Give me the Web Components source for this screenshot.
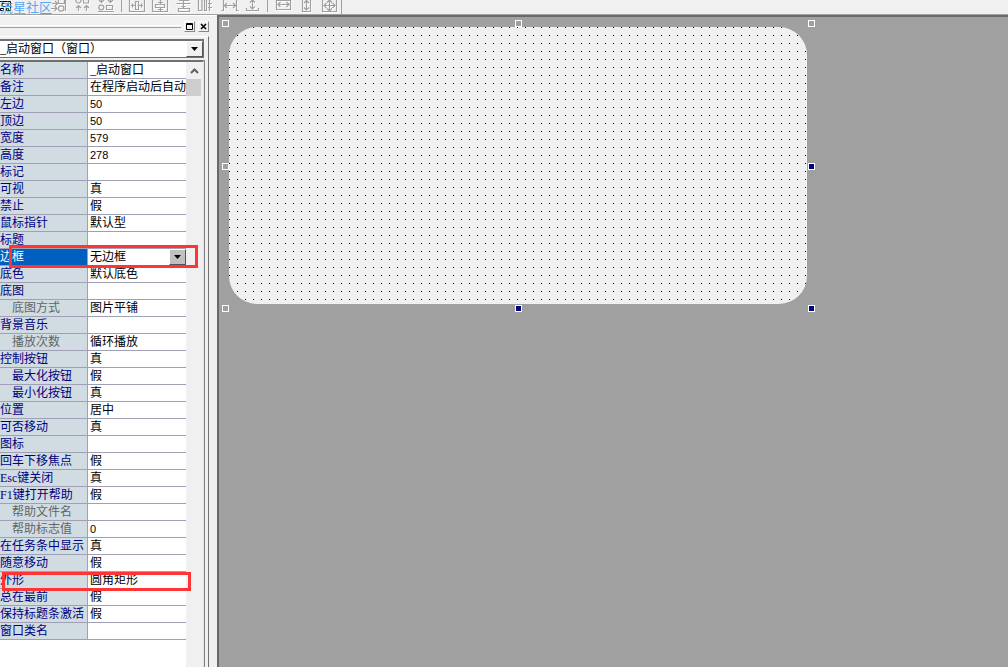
<!DOCTYPE html>
<html lang="zh-CN">
<head>
<meta charset="utf-8">
<title>窗口设计器</title>
<style>
html,body{margin:0;height:100%}
body{background:#f0f0f0;color:#000;font:12px/16px "Liberation Serif","Noto Sans CJK SC",serif;overflow:hidden}
</style>
</head>
<body>
<designer-app></designer-app>
<script>
class Base extends HTMLElement {
  connectedCallback() {
    if (!this.shadowRoot) this.attachShadow({mode: 'open'}).innerHTML = this.render();
  }
}

customElements.define('tool-button', class extends Base {
  render() {
    const x = this.getAttribute('start');
    return `<style>
      :host{display:block;flex:none}
      button{display:block;width:23px;height:14px;padding:0;border:0;background:none}
      svg{display:block;filter:drop-shadow(1px 1px 0 #fff)}
    </style>
    <button type="button" aria-label="${this.getAttribute('label')}"><svg width="23" height="14" viewBox="${x} 0 23 14" fill="none" stroke="#a0a0a0" stroke-width="1.2"><path d="${this.getAttribute('shape')}"/></svg></button>`;
  }
});

const tools = [
  [49, '左对齐', 'M52 3.5h5M55 1l2.500 2.500L55 6M58.500-1v4.500h6V-1M51 8.500h6M54.500 6l2.500 2.500-2.500 2.500M58.500 8.500a2.700 2.700 0 1 0 5.400 0a2.700 2.700 0 1 0-5.400 0M65.500 0v11'],
  [72, '顶对齐', 'M76 0v1.500l1.500 1.500h2L81 1.500V0M83.500-1v4h5v-4M78.500 11V5.500M76 8l2.500-2.500L81 8M86.500 11V5.500M84 8l2.500-2.500L89 8'],
  [95, '底对齐', 'M101.500-1v4M99 0l2.500 2.500L104 0M110.500-1v4M108 0l2.500 2.500L113 0M98.800 7.500a2.500 2.300 0 1 0 5 0a2.500 2.300 0 1 0-5 0M106.500 5.500h6v4h-6zM98 11.500h16'],
  null,
  [126, '水平居中', 'M129.500-1v12.500h15V-1M135.500 1.500h3v8h-3zM131 5.500h4M139 5.500h4M132.500 3.500v4M141.500 3.500v4'],
  [149, '垂直居中', 'M152.500-1v12.500h15V-1M155.500 4.500h9v3h-9zM160.500 0v4M160.500 8v3M158 2.500h5M158 9.500h5'],
  [172, '垂直分布', 'M179.500-1v1.500h9V-1M176.500 3.500h14M183.500 1v7M181.500 6.500h4M178.500 8.500h11v3h-11z'],
  [195, '水平分布', 'M198.500-1v11.500h3.500V-1M204.500-1v11.500h2V-1M208 3.500h4M208 7.500h4M209.500 0v11'],
  [218, '相同横距', 'M223.500 0v10.500h-2M236.500 0v10.500h2M224 5.500h12M227 3l-2.500 2.500L227 8M233 3l2.500 2.500L233 8'],
  [241, '相同纵距', 'M252.500-1v10M250 2.500L252.500 0L255 2.500M250 6.500l2.500 2.500L255 6.500M246.500 8v2.500h12V8'],
  null,
  [272, '相同宽度', 'M276.500-1v10.500h14V-1M278 4.500h11M280.500 2L278 4.500L280.500 7M286.500 2l2.500 2.500L286.500 7M276 .500h15'],
  [295, '相同高度', 'M302.500-1v12.500h8V-1M306.500 0v10M304 3l2.500-2.500L309 3M304 7.500l2.500 2.500L309 7.500'],
  [318, '相同大小', 'M322.500-1v12.500h14V-1M324 5.500h11M329.500 0v11M326.500 3L324 5.500L326.500 8M332.500 3l2.500 2.500L332.500 8M327 2.500L329.500 0L332 2.500M327 8.500l2.500 2.500L332 8.500']
];

customElements.define('tool-strip', class extends Base {
  render() {
    return `<style>
      :host{display:flex;height:14px;border-bottom:1px solid #a0a0a0}
      .tools{display:flex;height:14px;border-right:1px solid #a0a0a0}
      .brand{display:grid;width:49px;height:14px}
      .brand>*{grid-area:1/1}
      .brand span{font:13px/13px "Noto Sans CJK SC",sans-serif;color:#55aaf5;white-space:nowrap}
      i{width:1px;margin:0 4px 2px 3px;background:#a0a0a0}
    </style>
    <div class="tools" role="toolbar">
      <div class="brand">
        <svg width="12" height="12" fill="none" stroke="#000"><path d="M0 1.500h10.500v9H8M2 3.500h6v3H2zM.5 8.500h3v2h-3zM6.500 8.500h2v2h-2z"/></svg>
        <span>流星社区</span>
      </div>
      ${tools.map(t => t ? `<tool-button start="${t[0]}" label="${t[1]}" shape="${t[2]}"></tool-button>` : '<i></i>').join('')}
    </div>`;
  }
});

customElements.define('panel-caption', class extends Base {
  render() {
    return `<style>
      :host{display:flex;height:20px;align-items:center;gap:3px;padding:0 8px 0 0}
      hr{flex:1;height:1px;margin:0;border:0;border-top:1px solid #fff;border-bottom:1px solid #a0a0a0}
      button{box-sizing:border-box;width:11px;height:11px;padding:0;border:1px solid;border-color:#fff #888 #888 #fff;background:#f0f0f0}
      svg{display:block}
    </style>
    <hr>
    <button type="button" aria-label="最大化"><svg width="9" height="9" fill="none" stroke="#000"><path d="M1.500 1.500h6v6h-6zM1 2.500h7"/></svg></button>
    <button type="button" aria-label="关闭"><svg width="9" height="9" fill="none" stroke="#000" stroke-width="1.500"><path d="M2 2l5 5M7 2L2 7"/></svg></button>`;
  }
});

const arrow = `<svg width="7" height="4"><path d="M0 0h7L3.500 4z"/></svg>`;

customElements.define('drop-list', class extends Base {
  render() {
    return `<style>
      :host{display:grid;align-items:center}
      select,span{grid-area:1/1}
      select{appearance:none;width:100%;height:100%;margin:0;padding:0;border:0;border-radius:0;background:#fff;color:#000;font:inherit;outline:0}
      span{box-sizing:border-box;justify-self:end;display:grid;place-items:center;width:17px;height:100%;background:var(--face,#f0f0f0);border:1px solid;border-color:#fff #555 #555 #fff;pointer-events:none}
    </style>
    <select aria-label="${this.getAttribute('label')}"><option>${this.getAttribute('value')}</option></select><span>${arrow}</span>`;
  }
});

/* name, value, kind: d = disabled child, c = child, s = selected, m = marked */
const rows = [
  ['名称','_启动窗口'],['备注','在程序启动后自动'],['左边','50'],['顶边','50'],['宽度','579'],['高度','278'],
  ['标记',''],['可视','真'],['禁止','假'],['鼠标指针','默认型'],['标题',''],['边框','无边框','s'],['底色','默认底色'],
  ['底图',''],['底图方式','图片平铺','d'],['背景音乐',''],['播放次数','循环播放','d'],['控制按钮','真'],
  ['最大化按钮','假','c'],['最小化按钮','真','c'],['位置','居中'],['可否移动','真'],['图标',''],['回车下移焦点','假'],
  ['Esc键关闭','真'],['F1键打开帮助','假'],['帮助文件名','','d'],['帮助标志值','0','d'],['在任务条中显示','真'],
  ['随意移动','假'],['外形','圆角矩形','m'],['总在最前','假'],['保持标题条激活','假'],['窗口类名','']
];

customElements.define('property-grid', class extends Base {
  render() {
    const body = rows.map(([n, v, k = '']) => `<tr class="${k}"><th scope="row">${n}${k === 's' || k === 'm' ? '<b></b>' : ''}</th><td class="${/^\d+$/.test(v) ? 'num' : ''}">${k === 's' ? `<drop-list label="${n}" value="${v}"></drop-list>` : v}</td></tr>`).join('');
    return `<style>
      :host{display:grid;grid-template-columns:1fr 17px;background:#fff;border-top:2px solid #707070;border-right:1px solid #e3e3e3}
      table{border-collapse:separate;border-spacing:0;table-layout:fixed;width:100%;align-self:start}
      col:first-child{width:88px}
      tr{height:17px;position:relative}
      th,td{box-sizing:border-box;height:17px;padding:0;border-bottom:1px solid #a0a0b4;font-weight:400;text-align:left;white-space:nowrap;line-height:16px}
      th{background:#d0dce2;color:#000080;border-right:1px solid #a0a0b4}
      td{padding-left:2px;overflow:hidden}
      .num{font-family:"Liberation Sans",sans-serif;font-size:11px}
      .c th,.d th{padding-left:12px}
      .d th{color:#646464}
      .s th{background:#0060c0;color:#fff}
      drop-list{height:16px;--face:#c0c0c0}
      b{position:absolute;box-sizing:border-box;border:3px solid #ff3535;pointer-events:none;z-index:1}
      .s b{inset:-4px -12px -2px 9px}
      .m b{inset:0 -5px -2px 2px}
      .bar{background:#f0f0f0;display:flex;flex-direction:column}
      .bar button{width:16px;height:17px;padding:0;border:0;background:#f0f0f0;display:grid;place-items:center}
      .bar i{width:15px;height:17px;background:#cdcdcd}
    </style>
    <table><colgroup><col><col></colgroup><tbody>${body}</tbody></table>
    <div class="bar"><button type="button" aria-label="向上滚动"><svg width="9" height="6" fill="none" stroke="#606060" stroke-width="2"><path d="M1 5l3.500-3.500L8 5"/></svg></button><i></i></div>`;
  }
});

customElements.define('property-panel', class extends Base {
  render() {
    return `<style>
      :host{box-sizing:border-box;display:flex;flex-direction:column;width:217px;border-top:1px solid #fff}
      .body{flex:1;min-height:0;display:flex;flex-direction:column;gap:2px;margin-right:8px;padding:2px 3px 0 0;border-top:1px solid #fff;border-right:1px solid #707070}
      .combo{box-sizing:border-box;height:19px;margin-right:1px;border:solid #707070;border-width:2px 1px 1px 0}
      .grid{flex:1;min-height:0;overflow:hidden;border-right:1px solid #808080}
      property-grid{min-height:100%;box-sizing:border-box}
    </style>
    <panel-caption></panel-caption>
    <div class="body"><drop-list class="combo" label="对象" value="_启动窗口（窗口）"></drop-list><div class="grid"><property-grid></property-grid></div></div>`;
  }
});

customElements.define('form-canvas', class extends Base {
  render() {
    const hs = [['0','0',''],['50%','0',''],['100%','0',''],['0','50%',''],['100%','50%','on'],['0','100%',''],['50%','100%','on'],['100%','100%','on']];
    return `<style>
      :host{display:block;background:#a0a0a0;border:solid #696969;border-width:2px 0 0 2px}
      .frame{position:relative;box-sizing:border-box;width:586px;height:285px;margin:6px 0 0 6px;padding:4px}
      .form{width:578px;height:277px;border-radius:28px;background:radial-gradient(circle at .5px .5px,#000 .6px,transparent .6px) 0 0/8px 8px,#f0f0f0}
      i{position:absolute;box-sizing:border-box;width:7px;height:7px;margin:-3px 0 0 -3px;border:1px solid #fff}
      .on{background:#000080}
    </style>
    <div class="frame"><div class="form"></div>${hs.map(h => `<i class="${h[2]}" style="left:${h[0]};top:${h[1]}"></i>`).join('')}</div>`;
  }
});

customElements.define('designer-app', class extends Base {
  render() {
    return `<style>
      :host{display:flex;flex-direction:column;height:100vh}
      main{flex:1;min-height:0;display:flex}
      property-panel{flex:none}
      form-canvas{flex:1}
    </style>
    <tool-strip></tool-strip><main><property-panel></property-panel><form-canvas></form-canvas></main>`;
  }
});
</script>
</body>
</html>
